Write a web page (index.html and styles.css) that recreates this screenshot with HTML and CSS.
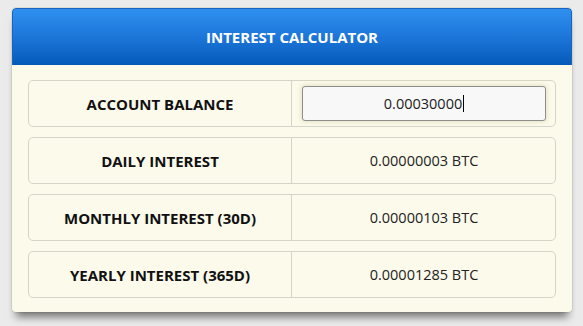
FILE: index.html
```html
<!DOCTYPE html>
<html>
<head>
<meta charset="utf-8">
<link rel="stylesheet" href="styles.css">
</head>
<body>
<div class="panel">
  <div class="header">INTEREST CALCULATOR</div>
  <div class="body">
    <div class="row">
      <div class="label">ACCOUNT BALANCE</div>
      <div class="value"><div class="input">0.00030000<span class="caret"></span></div></div>
    </div>
    <div class="row">
      <div class="label">DAILY INTEREST</div>
      <div class="value">0.00000003 BTC</div>
    </div>
    <div class="row">
      <div class="label">MONTHLY INTEREST (30D)</div>
      <div class="value">0.00000103 BTC</div>
    </div>
    <div class="row">
      <div class="label">YEARLY INTEREST (365D)</div>
      <div class="value">0.00001285 BTC</div>
    </div>
  </div>
</div>
</body>
</html>
```

FILE: styles.css
```css
html, body {
  margin: 0;
  padding: 0;
}
body {
  background: #ebebeb;
  font-family: "Open Sans", "Noto Sans", sans-serif;
  width: 583px;
  height: 326px;
  overflow: hidden;
}
.panel {
  margin: 8px 0 0 12px;
  width: 560px;
  background: #fcfaeb;
  border-radius: 4px;
  box-shadow: 0 9px 8px -4px rgba(0,0,0,0.5), 0 0 0 1px #dcdcd4;
  overflow: hidden;
}
.header {
  height: 57px;
  box-sizing: border-box;
  background: linear-gradient(to bottom, #2f90f0 0%, #1c76d9 50%, #055ab9 100%);
  border: 1px solid #1a64c0;
  border-bottom: none;
  border-radius: 4px 4px 0 0;
  color: #fff;
  font-weight: bold;
  font-size: 15px;
  display: flex;
  align-items: center;
  justify-content: center;
}
.body {
  padding: 15px 16px 14px 16px;
  display: flex;
  flex-direction: column;
  gap: 10px;
}
.row {
  display: flex;
  height: 47px;
  box-sizing: border-box;
  border: 1px solid #d6d4c8;
  border-radius: 5px;
}
.label {
  width: 262px;
  border-right: 1px solid #d6d4c8;
  display: flex;
  align-items: center;
  justify-content: center;
  font-weight: bold;
  font-size: 15px;
  color: #111;
}
.value {
  flex: 1;
  display: flex;
  align-items: center;
  justify-content: center;
  font-size: 14.5px;
  color: #222;
  padding: 0 9px 0 10px;
}
.input {
  flex: 1;
  height: 35px;
  box-sizing: border-box;
  border: 1px solid #8e8e8e;
  border-radius: 3px;
  background: #f8f8f8;
  box-shadow: 0 0 4px 1px rgba(190,180,120,0.35);
  display: flex;
  align-items: center;
  justify-content: center;
  font-size: 14.5px;
  color: #222;
}
.caret {
  display: inline-block;
  width: 1px;
  height: 17px;
  background: #000;
  margin-left: 1px;
}
```
